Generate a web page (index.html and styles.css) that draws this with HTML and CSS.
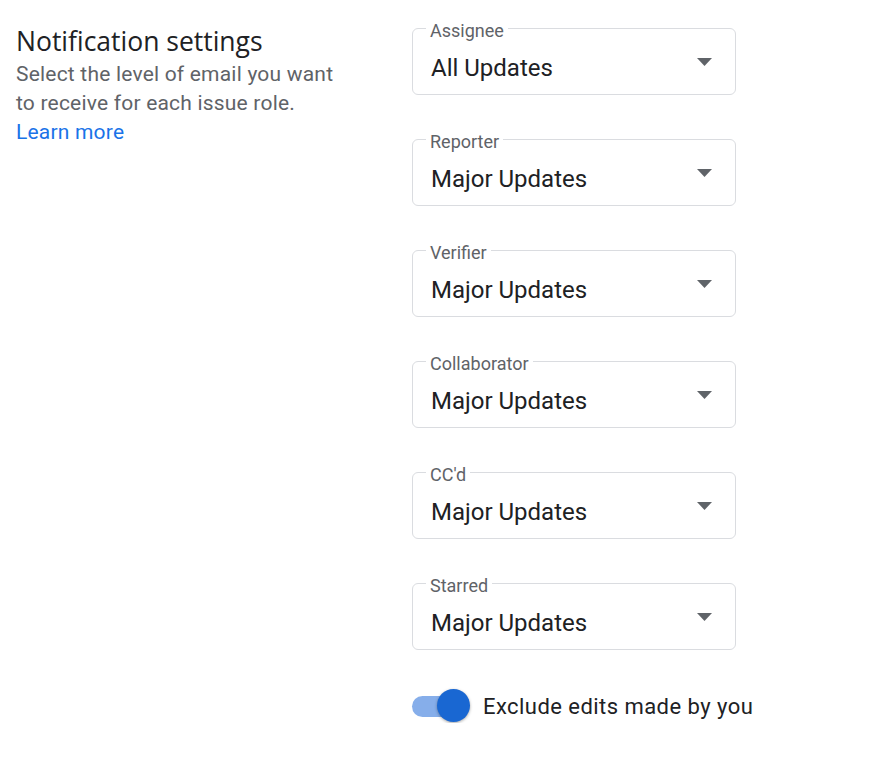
FILE: index.html
```html
<!DOCTYPE html>
<html>
<head>
<meta charset="utf-8">
<link rel="stylesheet" href="styles.css">
</head>
<body>
<div class="page">
  <div class="intro">
    <h1 class="title">Notification settings</h1>
    <p class="desc">Select the level of email you want to receive for each issue role.</p>
    <a class="link" href="#">Learn more</a>
  </div>
  <div class="fields">
    <div class="field"><span class="field-label">Assignee</span><span class="field-value">All Updates</span><svg class="arrow" viewBox="0 0 15 8"><path d="M0 0h15L7.5 8z"/></svg></div>
    <div class="field"><span class="field-label">Reporter</span><span class="field-value">Major Updates</span><svg class="arrow" viewBox="0 0 15 8"><path d="M0 0h15L7.5 8z"/></svg></div>
    <div class="field"><span class="field-label">Verifier</span><span class="field-value">Major Updates</span><svg class="arrow" viewBox="0 0 15 8"><path d="M0 0h15L7.5 8z"/></svg></div>
    <div class="field"><span class="field-label">Collaborator</span><span class="field-value">Major Updates</span><svg class="arrow" viewBox="0 0 15 8"><path d="M0 0h15L7.5 8z"/></svg></div>
    <div class="field"><span class="field-label">CC'd</span><span class="field-value">Major Updates</span><svg class="arrow" viewBox="0 0 15 8"><path d="M0 0h15L7.5 8z"/></svg></div>
    <div class="field"><span class="field-label">Starred</span><span class="field-value">Major Updates</span><svg class="arrow" viewBox="0 0 15 8"><path d="M0 0h15L7.5 8z"/></svg></div>
    <div class="toggle-row">
      <span class="switch"><span class="track"></span><span class="knob"></span></span>
      <span class="toggle-label">Exclude edits made by you</span>
    </div>
  </div>
</div>
</body>
</html>
```
FILE: styles.css
```css
* { box-sizing: border-box; }
body {
  margin: 0;
  background: #fff;
  font-family: Roboto, "Noto Sans", Arial, sans-serif;
  color: #202124;
}
.page {
  display: flex;
  padding: 28px 0 0 16px;
}
.intro {
  width: 396px;
  flex: none;
}
.title {
  margin: 0;
  font-family: "Open Sans", Roboto, sans-serif;
  font-size: 26.5px;
  font-weight: 400;
  line-height: 26px;
  color: #202124;
}
.desc {
  margin: 6px 0 0;
  font-size: 21px;
  letter-spacing: 0.2px;
  line-height: 29px;
  color: #5f6368;
  width: 330px;
}
.link {
  display: block;
  font-size: 21px;
  letter-spacing: 0.2px;
  line-height: 28px;
  color: #1a73e8;
  text-decoration: none;
}
.fields {
  display: flex;
  flex-direction: column;
  width: 324px;
}
.field {
  position: relative;
  height: 67px;
  border: 1px solid #dadce0;
  border-radius: 6px;
  display: flex;
  align-items: center;
  padding: 12px 0 0 18px;
}
.field + .field {
  margin-top: 44px;
}
.field-label {
  position: absolute;
  top: -9px;
  left: 13px;
  padding: 0 4px;
  background: #fff;
  font-size: 18px;
  line-height: 22px;
  color: #5f6368;
}
.field-value {
  font-size: 24px;
  line-height: 30px;
  color: #202124;
}
.arrow {
  position: absolute;
  right: 23px;
  top: 29px;
  width: 15px;
  height: 8px;
  fill: #5f6368;
}
.toggle-row {
  display: flex;
  align-items: center;
  gap: 13px;
  margin-top: 39px;
  white-space: nowrap;
}
.switch {
  position: relative;
  width: 58px;
  height: 34px;
  flex: none;
}
.track {
  position: absolute;
  left: 0;
  top: 7px;
  width: 52px;
  height: 21px;
  border-radius: 11px;
  background: #86aeea;
}
.knob {
  position: absolute;
  left: 25px;
  top: 0;
  width: 33px;
  height: 33px;
  border-radius: 50%;
  background: #1967d2;
  box-shadow: 0 1px 3px rgba(0,0,0,0.35);
}
.toggle-label {
  font-size: 22px;
  letter-spacing: 0.45px;
  color: #202124;
}
```
